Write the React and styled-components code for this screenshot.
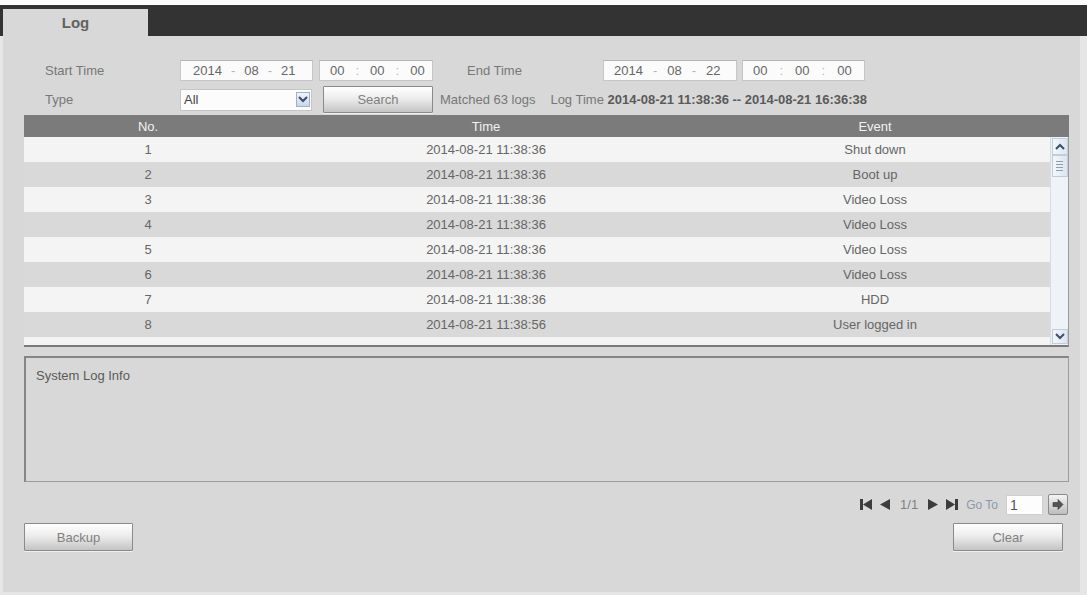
import React from 'react'
import styled, { createGlobalStyle } from 'styled-components'

const GlobalStyle = createGlobalStyle`
  html, body {
    margin: 0;
    padding: 0;
    background: #e6e6e6;
  }
  body {
    font-family: "Liberation Sans", Arial, sans-serif;
    font-size: 13px;
  }
`

const logs = [
  [1, '2014-08-21 11:38:36', 'Shut down'],
  [2, '2014-08-21 11:38:36', 'Boot up'],
  [3, '2014-08-21 11:38:36', 'Video Loss'],
  [4, '2014-08-21 11:38:36', 'Video Loss'],
  [5, '2014-08-21 11:38:36', 'Video Loss'],
  [6, '2014-08-21 11:38:36', 'Video Loss'],
  [7, '2014-08-21 11:38:36', 'HDD'],
  [8, '2014-08-21 11:38:56', 'User logged in'],
]

const ChevronUp = () => (
  <svg width="10" height="7" viewBox="0 0 10 7">
    <path d="M1 6 L5 2 L9 6" fill="none" stroke="#3b4d6b" strokeWidth="2" />
  </svg>
)

const ChevronDown = ({ color = '#3b4d6b' }) => (
  <svg width="10" height="7" viewBox="0 0 10 7">
    <path d="M1 1 L5 5 L9 1" fill="none" stroke={color} strokeWidth="2" />
  </svg>
)

const FirstIcon = () => (
  <svg width="12" height="11" viewBox="0 0 12 11">
    <rect x="0" y="0" width="3" height="11" fill="#3c3c3c" />
    <path d="M12 0 L3 5.5 L12 11 Z" fill="#3c3c3c" />
  </svg>
)

const PrevIcon = () => (
  <svg width="10" height="11" viewBox="0 0 10 11">
    <path d="M10 0 L0 5.5 L10 11 Z" fill="#3c3c3c" />
  </svg>
)

const NextIcon = () => (
  <svg width="10" height="11" viewBox="0 0 10 11">
    <path d="M0 0 L10 5.5 L0 11 Z" fill="#3c3c3c" />
  </svg>
)

const LastIcon = () => (
  <svg width="12" height="11" viewBox="0 0 12 11">
    <path d="M0 0 L9 5.5 L0 11 Z" fill="#3c3c3c" />
    <rect x="9" y="0" width="3" height="11" fill="#3c3c3c" />
  </svg>
)

const GoIcon = () => (
  <svg width="12" height="11" viewBox="0 0 12 11">
    <path d="M1 3.5 H6 V0.5 L11 5.5 L6 10.5 V7.5 H1 Z" fill="#555" stroke="#333" strokeWidth="0.6" />
  </svg>
)

const Screen = styled.div`
  width: 1087px;
  height: 595px;
  display: flex;
  flex-direction: column;
  background: #e6e6e6;
  overflow: hidden;
`

const TopGap = styled.div`
  height: 5px;
  background: #fbfbfb;
`

const TabStrip = styled.div`
  height: 31px;
  background: #333;
  display: flex;
  align-items: flex-end;
  padding-left: 3px;
`

const Tab = styled.div`
  width: 145px;
  height: 27px;
  background: #d8d8d8;
  display: flex;
  align-items: center;
  justify-content: center;
  font-size: 15px;
  font-weight: bold;
  color: #626262;
`

const Panel = styled.div`
  flex: 1;
  margin: 0 7px 3px 3px;
  background: #d8d8d8;
  padding: 24px 11px 0 21px;
  display: flex;
  flex-direction: column;
`

const FormRow = styled.div`
  display: flex;
  align-items: center;
  height: ${p => p.$h}px;
  margin-top: ${p => p.$mt || 0}px;
`

const Label = styled.div`
  width: ${p => p.$w}px;
  padding-left: ${p => p.$pl || 0}px;
  margin-left: ${p => p.$ml || 0}px;
  box-sizing: border-box;
  color: #777;
`

const Field = styled.div`
  box-sizing: border-box;
  width: ${p => p.$w}px;
  height: 21px;
  margin-left: ${p => p.$ml || 0}px;
  background: #fbfbfb;
  border: 1px solid #c6c6c6;
  border-top-color: #b4b4b4;
  display: flex;
  align-items: center;
  padding-left: ${p => p.$pl}px;
  gap: ${p => p.$gap}px;
  color: #666;
`

const Sep = styled.span`
  color: #b4b4b4;
`

const Select = styled.div`
  box-sizing: border-box;
  width: 132px;
  height: 22px;
  background: #fcfcfc;
  border: 1px solid #c6c6c6;
  display: flex;
  align-items: center;
  justify-content: space-between;
  padding: 0 1px 0 3px;
  color: #444;
`

const SelectArrow = styled.div`
  width: 14px;
  height: 15px;
  box-sizing: border-box;
  border: 1px solid #9fb0c8;
  background: linear-gradient(#f2f6fc, #c9d6e8);
  display: flex;
  align-items: center;
  justify-content: center;
`

const Button = styled.button`
  box-sizing: border-box;
  width: ${p => p.$w}px;
  height: ${p => p.$h}px;
  margin-left: ${p => p.$ml || 0}px;
  border: 1px solid #8a8a8a;
  border-radius: 1px;
  background: linear-gradient(#ffffff 0%, #ededed 45%, #c4c4c4 100%);
  color: #808080;
  font-family: inherit;
  font-size: 13px;
  padding: 0;
  box-shadow: 0 1px 0 #f0f0f0;
`

const Info = styled.span`
  color: #777;
  margin-left: ${p => p.$ml || 0}px;
  white-space: nowrap;
  b {
    color: #5a5a5a;
  }
`

const Table = styled.div`
  margin-top: 2px;
  display: flex;
  flex-direction: column;
`

const cols = '248px 428px 1fr'

const HeadRow = styled.div`
  height: 22px;
  background: #7b7b7b;
  display: grid;
  grid-template-columns: ${cols};
  padding-right: 19px;
  align-items: center;
  color: #f2f2f2;
  text-align: center;
`

const TableBody = styled.div`
  display: flex;
  height: 208px;
  border-left: 1px solid #7a7a7a;
  border-right: 1px solid #9a9a9a;
  border-bottom: 2px solid #7a7a7a;
`

const Rows = styled.div`
  flex: 1;
  overflow: hidden;
  margin-left: -1px;
  background: #f4f4f4;
`

const Row = styled.div`
  height: 25px;
  display: grid;
  grid-template-columns: ${cols};
  align-items: center;
  text-align: center;
  color: #666;
  background: ${p => (p.$odd ? '#f4f4f4' : '#d9d9d9')};
`

const Scrollbar = styled.div`
  width: 18px;
  background: #eff2f7;
  border-left: 1px solid #d6dce6;
  display: flex;
  flex-direction: column;
  align-items: center;
  padding-top: 1px;
  box-sizing: border-box;
`

const ScrollBtn = styled.div`
  width: 16px;
  height: ${p => p.$h}px;
  box-sizing: border-box;
  border: 1px solid #c2cddc;
  background: linear-gradient(90deg, #f4f7fb, #dde5f0);
  display: flex;
  align-items: center;
  justify-content: center;
  margin-top: ${p => (p.$push ? 'auto' : '0')};
  margin-bottom: ${p => p.$mb || 0}px;
`

const Grip = styled.div`
  width: 7px;
  display: flex;
  flex-direction: column;
  gap: 2px;
  span {
    height: 1px;
    background: #8f9db3;
  }
`

const LogBox = styled.div`
  margin-top: 9px;
  height: 126px;
  box-sizing: border-box;
  border: 1px solid #9c9c9c;
  border-top: 2px solid #858585;
  border-left: 2px solid #858585;
  padding: 10px 10px;
  color: #5a5a5a;
`

const Pager = styled.div`
  margin-top: 12px;
  height: 21px;
  display: flex;
  align-items: center;
  justify-content: flex-end;
  padding-right: 1px;
  gap: 8px;
`

const PageText = styled.span`
  color: #808080;
  margin: 0 2px;
`

const GoText = styled.span`
  color: #8c98aa;
  font-size: 12px;
`

const PageInput = styled.div`
  box-sizing: border-box;
  width: 37px;
  height: 20px;
  background: #fdfdfd;
  border: 1px solid #cfcfcf;
  padding-left: 3px;
  display: flex;
  align-items: center;
  color: #555;
  font-size: 14px;
`

const GoButton = styled.div`
  box-sizing: border-box;
  width: 20px;
  height: 21px;
  margin-left: -3px;
  border: 1px solid #8a8a8a;
  border-radius: 2px;
  background: linear-gradient(#f4f4f4, #bdbdbd);
  display: flex;
  align-items: center;
  justify-content: center;
`

const ButtonRow = styled.div`
  margin-top: 8px;
  display: flex;
  justify-content: space-between;
  padding-right: 6px;
`

export default function App() {
  return (
    <Screen>
      <GlobalStyle />
      <TopGap />
      <TabStrip>
        <Tab>Log</Tab>
      </TabStrip>
      <Panel>
        <FormRow $h={21}>
          <Label $w={156} $pl={21}>Start Time</Label>
          <Field $w={133} $pl={12} $gap={9}>
            <span>2014</span><Sep>-</Sep><span>08</span><Sep>-</Sep><span>21</span>
          </Field>
          <Field $w={114} $ml={6} $pl={10} $gap={11}>
            <span>00</span><Sep>:</Sep><span>00</span><Sep>:</Sep><span>00</span>
          </Field>
          <Label $w={136} $ml={34}>End Time</Label>
          <Field $w={134} $pl={10} $gap={10}>
            <span>2014</span><Sep>-</Sep><span>08</span><Sep>-</Sep><span>22</span>
          </Field>
          <Field $w={123} $ml={5} $pl={10} $gap={12}>
            <span>00</span><Sep>:</Sep><span>00</span><Sep>:</Sep><span>00</span>
          </Field>
        </FormRow>

        <FormRow $h={27} $mt={5}>
          <Label $w={156} $pl={21}>Type</Label>
          <Select>
            <span>All</span>
            <SelectArrow>
              <ChevronDown />
            </SelectArrow>
          </Select>
          <Button $w={110} $h={27} $ml={11}>Search</Button>
          <Info $ml={7}>Matched 63 logs</Info>
          <Info $ml={15}>
            Log Time <b>2014-08-21 11:38:36 -- 2014-08-21 16:36:38</b>
          </Info>
        </FormRow>

        <Table>
          <HeadRow>
            <span>No.</span>
            <span>Time</span>
            <span>Event</span>
          </HeadRow>
          <TableBody>
            <Rows>
              {logs.map(([no, time, event]) => (
                <Row key={no} $odd={no % 2 === 1}>
                  <span>{no}</span>
                  <span>{time}</span>
                  <span>{event}</span>
                </Row>
              ))}
            </Rows>
            <Scrollbar>
              <ScrollBtn $h={17}>
                <ChevronUp />
              </ScrollBtn>
              <ScrollBtn $h={22}>
                <Grip>
                  <span /><span /><span /><span />
                </Grip>
              </ScrollBtn>
              <ScrollBtn $h={15} $push $mb={1}>
                <ChevronDown />
              </ScrollBtn>
            </Scrollbar>
          </TableBody>
        </Table>

        <LogBox>System Log Info</LogBox>

        <Pager>
          <FirstIcon />
          <PrevIcon />
          <PageText>1/1</PageText>
          <NextIcon />
          <LastIcon />
          <GoText>Go To</GoText>
          <PageInput>1</PageInput>
          <GoButton>
            <GoIcon />
          </GoButton>
        </Pager>

        <ButtonRow>
          <Button $w={109} $h={28}>Backup</Button>
          <Button $w={110} $h={28}>Clear</Button>
        </ButtonRow>
      </Panel>
    </Screen>
  )
}
